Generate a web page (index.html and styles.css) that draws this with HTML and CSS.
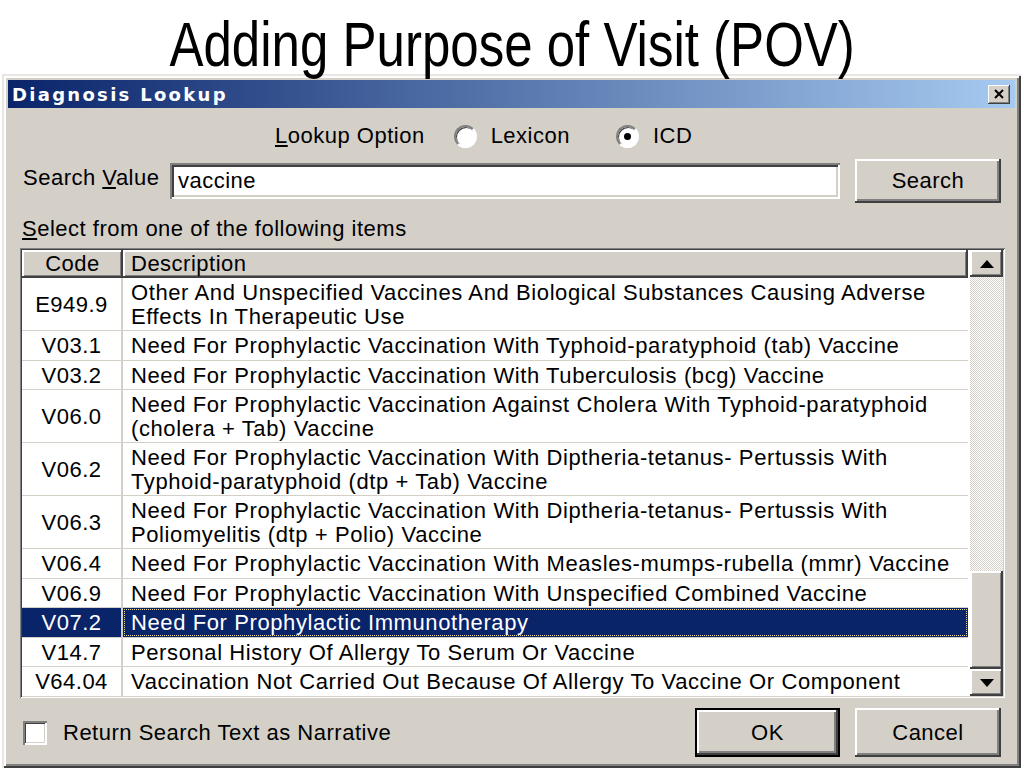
FILE: index.html
```html
<!DOCTYPE html>
<html lang="en">
<head>
  <meta charset="UTF-8" />
  <title>Adding Purpose of Visit (POV)</title>
  <link rel="stylesheet" href="styles.css">
</head>
<body>
  <div class="slide-title"><span>Adding Purpose of Visit (POV)</span></div>

  <div class="dialog">
    <div class="titlebar">
      <span class="titlebar-text">Diagnosis Lookup</span>
      <span class="close-btn">
        <svg width="12" height="10" viewBox="0 0 12 10"><path d="M2 1 L10 9 M10 1 L2 9" stroke="#000" stroke-width="2"/></svg>
      </span>
    </div>

    <div class="dialog-body">
      <div class="lookup-row">
        <span class="lookup-label"><u>L</u>ookup Option</span>
        <span class="radio"></span>
        <span class="radio-label">Lexicon</span>
        <span class="radio checked"></span>
        <span class="radio-label">ICD</span>
      </div>

      <div class="search-row">
        <span class="search-label">Search <u>V</u>alue</span>
        <div class="search-input">vaccine</div>
        <button class="btn search-btn">Search</button>
      </div>

      <div class="select-label"><u>S</u>elect from one of the following items</div>

      <div class="listbox">
        <div class="list-rows">
          <div class="list-head">
            <div class="head-cell code">Code</div>
            <div class="head-cell desc">Description</div>
          </div>
          <div class="row"><div class="code">E949.9</div><div class="desc">Other And Unspecified Vaccines And Biological Substances Causing Adverse<br>Effects In Therapeutic Use</div></div>
          <div class="row"><div class="code">V03.1</div><div class="desc">Need For Prophylactic Vaccination With Typhoid-paratyphoid (tab) Vaccine</div></div>
          <div class="row"><div class="code">V03.2</div><div class="desc">Need For Prophylactic Vaccination With Tuberculosis (bcg) Vaccine</div></div>
          <div class="row"><div class="code">V06.0</div><div class="desc">Need For Prophylactic Vaccination Against Cholera With Typhoid-paratyphoid<br>(cholera + Tab) Vaccine</div></div>
          <div class="row"><div class="code">V06.2</div><div class="desc">Need For Prophylactic Vaccination With Diptheria-tetanus- Pertussis With<br>Typhoid-paratyphoid (dtp + Tab) Vaccine</div></div>
          <div class="row"><div class="code">V06.3</div><div class="desc">Need For Prophylactic Vaccination With Diptheria-tetanus- Pertussis With<br>Poliomyelitis (dtp + Polio) Vaccine</div></div>
          <div class="row"><div class="code">V06.4</div><div class="desc">Need For Prophylactic Vaccination With Measles-mumps-rubella (mmr) Vaccine</div></div>
          <div class="row"><div class="code">V06.9</div><div class="desc">Need For Prophylactic Vaccination With Unspecified Combined Vaccine</div></div>
          <div class="row selected"><div class="code">V07.2</div><div class="desc">Need For Prophylactic Immunotherapy</div></div>
          <div class="row"><div class="code">V14.7</div><div class="desc">Personal History Of Allergy To Serum Or Vaccine</div></div>
          <div class="row last"><div class="code">V64.04</div><div class="desc">Vaccination Not Carried Out Because Of Allergy To Vaccine Or Component</div></div>
        </div>
        <div class="scrollbar">
          <div class="sb-btn">
            <svg width="14" height="8" viewBox="0 0 14 8"><path d="M7 0 L14 8 L0 8 Z" fill="#000"/></svg>
          </div>
          <div class="sb-track"></div>
          <div class="sb-thumb"></div>
          <div class="sb-btn">
            <svg width="14" height="8" viewBox="0 0 14 8"><path d="M0 0 L14 0 L7 8 Z" fill="#000"/></svg>
          </div>
        </div>
      </div>

      <div class="bottom-row">
        <span class="checkbox"></span>
        <span class="check-label">Return Search Text as Narrative</span>
        <button class="btn ok-btn">OK</button>
        <button class="btn cancel-btn">Cancel</button>
      </div>
    </div>
  </div>
</body>
</html>
```

FILE: styles.css
```css
body {
  margin: 0;
  background: #fff;
  font-family: "Liberation Sans", Arial, sans-serif;
  overflow: hidden;
}

.slide-title {
  height: 74px;
  text-align: center;
  font-size: 63px;
  line-height: 88px;
  color: #000;
}

.slide-title span {
  display: inline-block;
  transform: scaleX(0.81);
}

.dialog {
  width: 1019px;
  margin-left: 2px;
  padding: 6px;
  box-sizing: border-box;
  background: #d4d0c8;
  box-shadow: inset 2px 2px #e8e6e2, inset -2px -2px #404040, inset 4px 4px #fff, inset -4px -4px #808080;
  font-size: 22px;
  letter-spacing: 0.5px;
  color: #000;
}

.titlebar {
  height: 28px;
  display: flex;
  align-items: center;
  justify-content: space-between;
  padding: 0 5px 0 4px;
  background: linear-gradient(to right, #0a246a, #a6caf0);
}

.titlebar-text {
  font-family: "DejaVu Sans", Verdana, sans-serif;
  font-weight: bold;
  font-size: 18px;
  letter-spacing: 2.3px;
  color: #fff;
}

.close-btn {
  width: 22px;
  height: 19px;
  display: flex;
  align-items: center;
  justify-content: center;
  background: #d4d0c8;
  box-shadow: inset -1px -1px #404040, inset 1px 1px #fff, inset -2px -2px #808080;
}

.dialog-body {
  padding: 12px 10px 5px 12px;
}

.lookup-row {
  height: 32px;
  display: flex;
  align-items: center;
  padding-left: 255px;
}

.radio {
  width: 19px;
  height: 19px;
  border-radius: 50%;
  background: #fff;
  border: 2px solid;
  border-color: #808080 #fff #fff #808080;
  box-shadow: inset 1px 1px #404040;
  display: flex;
  align-items: center;
  justify-content: center;
  margin-left: 29px;
  margin-right: 14px;
}

.radio ~ .radio {
  margin-left: 46px;
}

.radio.checked::after {
  content: "";
  width: 7px;
  height: 7px;
  border-radius: 50%;
  background: #000;
}

.search-row {
  height: 44px;
  margin-top: 7px;
  display: flex;
  align-items: center;
}

.search-label {
  margin-left: 3px;
  margin-top: -6px;
  width: 147px;
}

.search-input {
  width: 670px;
  height: 36px;
  box-sizing: border-box;
  background: #fff;
  padding: 4px 8px;
  line-height: 28px;
  box-shadow: inset 2px 2px #808080, inset -2px -2px #fff, inset 4px 4px #404040, inset -4px -4px #d4d0c8;
}

.btn {
  font: inherit;
  letter-spacing: inherit;
  color: #000;
  background: #d4d0c8;
  border: none;
  height: 44px;
  width: 146px;
  padding: 0;
  box-shadow: inset -2px -2px #404040, inset 2px 2px #fff, inset -4px -4px #808080;
}

.search-btn {
  margin-left: auto;
  margin-right: 4px;
}

.select-label {
  margin-top: 13px;
  height: 26px;
  line-height: 26px;
  margin-left: 2px;
}

.listbox {
  margin-top: 6px;
  height: 450px;
  box-sizing: border-box;
  padding: 2px;
  display: flex;
  background: #fff;
  box-shadow: inset 1px 1px #808080, inset -1px -1px #fff, inset 2px 2px #404040, inset -2px -2px #d4d0c8;
}

.list-rows {
  flex: 1;
  display: flex;
  flex-direction: column;
}

.list-head {
  display: flex;
  height: 28px;
}

.head-cell {
  background: #d4d0c8;
  line-height: 28px;
  box-shadow: inset -2px -2px #404040, inset 2px 2px #fff, inset -3px -3px #808080;
}

.list-head .desc {
  flex: 1;
  padding-left: 8px;
}

.code {
  width: 99px;
  flex-shrink: 0;
  text-align: center;
  border-right: 2px solid #d4d0c8;
}

.list-head .code {
  border-right: none;
  width: 101px;
}

.row {
  display: flex;
  border-bottom: 1px solid #d4d0c8;
  line-height: 23.5px;
}

.row.last {
  border-bottom: none;
}

.row .code {
  display: flex;
  align-items: center;
  justify-content: center;
  padding: 3px 0 2px;
}

.row .desc {
  flex: 1;
  padding: 3px 0 2px 8px;
  letter-spacing: 0.6px;
}

.row.selected {
  background: #0a246a;
  color: #fff;
}

.row.selected .desc {
  outline: 1px dotted #e8d890;
  outline-offset: -2px;
}

.scrollbar {
  width: 33px;
  margin-left: 2px;
  display: flex;
  flex-direction: column;
}

.sb-btn {
  height: 27px;
  display: flex;
  align-items: center;
  justify-content: center;
  background: #d4d0c8;
  box-shadow: inset -2px -2px #404040, inset 2px 2px #fff, inset -3px -3px #808080;
}

.sb-track {
  flex: 1;
  background: repeating-conic-gradient(#d4d0c8 0 25%, #fff 0 50%) 0 0 / 2px 2px;
}

.sb-thumb {
  height: 98px;
  background: #d4d0c8;
  box-shadow: inset -2px -2px #404040, inset 2px 2px #fff, inset -3px -3px #808080;
}

.bottom-row {
  margin-top: 10px;
  height: 49px;
  display: flex;
  align-items: center;
}

.checkbox {
  width: 24px;
  height: 24px;
  box-sizing: border-box;
  margin-left: 3px;
  background: #fff;
  box-shadow: inset 2px 2px #808080, inset -2px -2px #fff, inset 3px 3px #404040, inset -3px -3px #d4d0c8;
}

.check-label {
  margin-left: 16px;
}

.ok-btn {
  margin-left: auto;
  height: 49px;
  width: 145px;
  box-shadow: inset 0 0 0 2px #000, inset -4px -4px #404040, inset 4px 4px #fff, inset -6px -6px #808080;
}

.cancel-btn {
  margin-left: 15px;
  margin-right: 4px;
  height: 49px;
}
```
